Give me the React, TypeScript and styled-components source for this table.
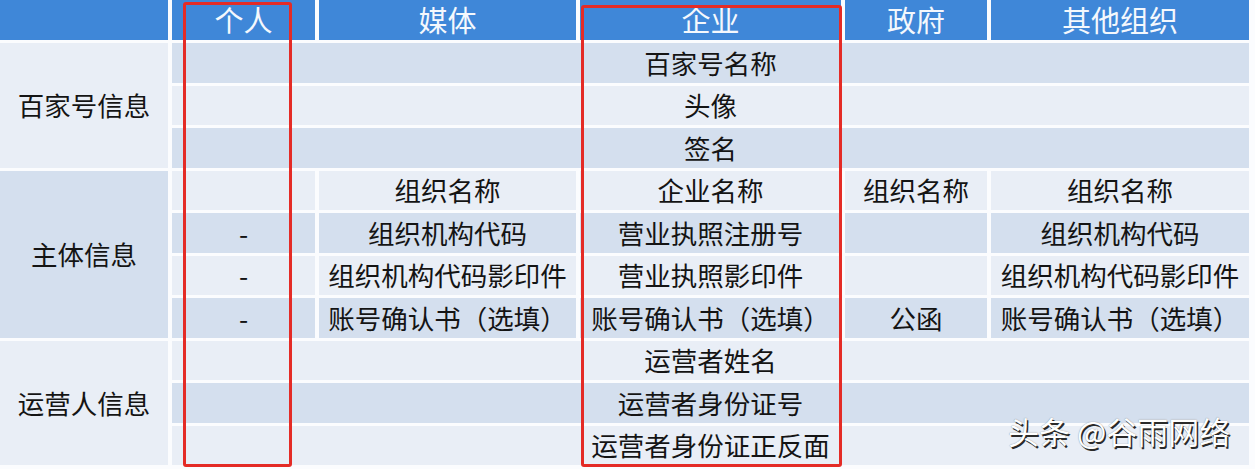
import React from "react";
import styled, { createGlobalStyle } from "styled-components";

const GlobalStyle = createGlobalStyle`
  html, body {
    margin: 0;
    padding: 0;
    background: #fbfcfe;
    overflow: hidden;
  }
  body {
    font-family: "Noto Sans CJK SC", "Noto Sans", sans-serif;
  }
`;

const Page = styled.div`
  position: relative;
  width: 1255px;
  height: 469px;
  background: #fbfcfe;
`;

const Table = styled.div`
  display: grid;
  grid-template-columns: 168px 143px 257px 261px 142px 258px;
  grid-template-rows: 40px repeat(10, 39.5px);
  column-gap: 4px;
  row-gap: 3px;
`;

const HeadCell = styled.div`
  background: #3f87d8;
  color: #f4f8fd;
  font-size: 29px;
  line-height: 1;
  display: flex;
  align-items: center;
  justify-content: center;
  padding-bottom: 2px;
`;

const Cell = styled.div<{ $dark?: boolean; $span?: number; $rows?: number }>`
  background: ${({ $dark }) => ($dark ? "#d4dfee" : "#e9eef6")};
  color: #141414;
  font-size: 26.5px;
  line-height: 1;
  display: flex;
  align-items: center;
  justify-content: center;
  white-space: nowrap;
  grid-column: ${({ $span }) => ($span ? `span ${$span}` : "auto")};
  grid-row: ${({ $rows }) => ($rows ? `span ${$rows}` : "auto")};
`;

const Frame = styled.div<{ $left: number; $top: number; $w: number; $h: number }>`
  position: absolute;
  left: ${({ $left }) => $left}px;
  top: ${({ $top }) => $top}px;
  width: ${({ $w }) => $w}px;
  height: ${({ $h }) => $h}px;
  box-sizing: border-box;
  border: 3px solid #e42b26;
  border-radius: 3px;
  pointer-events: none;
`;

const Watermark = styled.div`
  position: absolute;
  left: 1008px;
  top: 412px;
  color: #ffffff;
  font-size: 31px;
  line-height: 1.2;
  white-space: nowrap;
  text-shadow: 1.5px 1.5px 0 #2a2a2a, 0 0 1px rgba(0, 0, 0, 0.5);
`;

const headers = ["", "个人", "媒体", "企业", "政府", "其他组织"];

const subjectRows = [
  ["", "组织名称", "企业名称", "组织名称", "组织名称"],
  ["-", "组织机构代码", "营业执照注册号", "", "组织机构代码"],
  ["-", "组织机构代码影印件", "营业执照影印件", "", "组织机构代码影印件"],
  ["-", "账号确认书（选填）", "账号确认书（选填）", "公函", "账号确认书（选填）"],
];

const App: React.FC = () => {
  return (
    <Page>
      <GlobalStyle />
      <Table>
        {headers.map((h, i) => (
          <HeadCell key={i}>{h}</HeadCell>
        ))}

        <Cell $rows={3}>百家号信息</Cell>
        <Cell $span={5} $dark>百家号名称</Cell>
        <Cell $span={5}>头像</Cell>
        <Cell $span={5} $dark>签名</Cell>

        <Cell $rows={4} $dark>主体信息</Cell>
        {subjectRows.map((row, r) =>
          row.map((text, c) => (
            <Cell key={`${r}-${c}`} $dark={r % 2 === 1}>
              {text}
            </Cell>
          ))
        )}

        <Cell $rows={3}>运营人信息</Cell>
        <Cell $span={5}>运营者姓名</Cell>
        <Cell $span={5} $dark>运营者身份证号</Cell>
        <Cell $span={5}>运营者身份证正反面</Cell>
      </Table>

      <Frame $left={183} $top={2} $w={109} $h={465} />
      <Frame $left={581} $top={5} $w={261} $h={462} />
      <Watermark>头条 @谷雨网络</Watermark>
    </Page>
  );
};

export default App;
